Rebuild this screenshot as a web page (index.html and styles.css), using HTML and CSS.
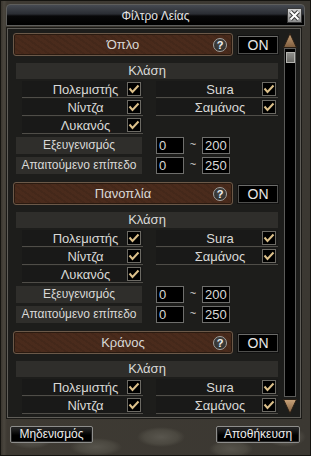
FILE: index.html
```html
<!DOCTYPE html>
<html lang="el">
<head>
    <meta charset="UTF-8">
    <meta name="viewport" content="width=device-width, initial-scale=1.0">
    <title>Φίλτρο Λείας</title>
    <link rel="stylesheet" href="styles.css">
</head>
<body>
<div class="window">
    <!-- Γραμμή τίτλου -->
    <div class="titlebar">
        <span class="title-spacer"></span>
        <span class="title">Φίλτρο Λείας</span>
        <span class="close">
            <svg width="15" height="15" viewBox="0 0 15 15">
                <defs>
                    <linearGradient id="cg" x1="0" y1="0" x2="0" y2="1">
                        <stop offset="0" stop-color="#d6d6d6"/>
                        <stop offset="1" stop-color="#8a8a8a"/>
                    </linearGradient>
                </defs>
                <rect x="0.5" y="0.5" width="14" height="14" fill="url(#cg)" stroke="#3a3a3a"/>
                <path d="M3.5 3.5 L11.5 11.5 M11.5 3.5 L3.5 11.5" stroke="#3c3c3c" stroke-width="4"/>
                <path d="M3.5 3.5 L11.5 11.5 M11.5 3.5 L3.5 11.5" stroke="#ffffff" stroke-width="2"/>
            </svg>
        </span>
    </div>

    <!-- Πίνακας φίλτρων -->
    <div class="panel">
        <div class="list">

            <section class="group">
                <div class="group-head">
                    <div class="group-name"><span class="group-title">Όπλο</span><span class="help">?</span></div>
                    <span class="toggle">ON</span>
                </div>
                <div class="class-title">Κλάση</div>
                <div class="class-grid">
                    <div class="class-cell"><span class="cell-label">Πολεμιστής</span><span class="check"><svg width="12" height="12" viewBox="0 0 12 12"><path d="M1.5 5.5 L4.5 9 L10.5 2.5" fill="none" stroke="#dcc08a" stroke-width="2"/></svg></span></div>
                    <div class="class-cell"><span class="cell-label">Sura</span><span class="check"><svg width="12" height="12" viewBox="0 0 12 12"><path d="M1.5 5.5 L4.5 9 L10.5 2.5" fill="none" stroke="#dcc08a" stroke-width="2"/></svg></span></div>
                    <div class="class-cell"><span class="cell-label">Νίντζα</span><span class="check"><svg width="12" height="12" viewBox="0 0 12 12"><path d="M1.5 5.5 L4.5 9 L10.5 2.5" fill="none" stroke="#dcc08a" stroke-width="2"/></svg></span></div>
                    <div class="class-cell"><span class="cell-label">Σαμάνος</span><span class="check"><svg width="12" height="12" viewBox="0 0 12 12"><path d="M1.5 5.5 L4.5 9 L10.5 2.5" fill="none" stroke="#dcc08a" stroke-width="2"/></svg></span></div>
                    <div class="class-cell"><span class="cell-label">Λυκανός</span><span class="check"><svg width="12" height="12" viewBox="0 0 12 12"><path d="M1.5 5.5 L4.5 9 L10.5 2.5" fill="none" stroke="#dcc08a" stroke-width="2"/></svg></span></div>
                </div>
                <div class="range-row">
                    <span class="range-label">Εξευγενισμός</span>
                    <span class="field">0</span><span class="tilde">~</span><span class="field">200</span>
                </div>
                <div class="range-row">
                    <span class="range-label">Απαιτούμενο επίπεδο</span>
                    <span class="field">0</span><span class="tilde">~</span><span class="field">250</span>
                </div>
            </section>

            <section class="group">
                <div class="group-head">
                    <div class="group-name"><span class="group-title">Πανοπλία</span><span class="help">?</span></div>
                    <span class="toggle">ON</span>
                </div>
                <div class="class-title">Κλάση</div>
                <div class="class-grid">
                    <div class="class-cell"><span class="cell-label">Πολεμιστής</span><span class="check"><svg width="12" height="12" viewBox="0 0 12 12"><path d="M1.5 5.5 L4.5 9 L10.5 2.5" fill="none" stroke="#dcc08a" stroke-width="2"/></svg></span></div>
                    <div class="class-cell"><span class="cell-label">Sura</span><span class="check"><svg width="12" height="12" viewBox="0 0 12 12"><path d="M1.5 5.5 L4.5 9 L10.5 2.5" fill="none" stroke="#dcc08a" stroke-width="2"/></svg></span></div>
                    <div class="class-cell"><span class="cell-label">Νίντζα</span><span class="check"><svg width="12" height="12" viewBox="0 0 12 12"><path d="M1.5 5.5 L4.5 9 L10.5 2.5" fill="none" stroke="#dcc08a" stroke-width="2"/></svg></span></div>
                    <div class="class-cell"><span class="cell-label">Σαμάνος</span><span class="check"><svg width="12" height="12" viewBox="0 0 12 12"><path d="M1.5 5.5 L4.5 9 L10.5 2.5" fill="none" stroke="#dcc08a" stroke-width="2"/></svg></span></div>
                    <div class="class-cell"><span class="cell-label">Λυκανός</span><span class="check"><svg width="12" height="12" viewBox="0 0 12 12"><path d="M1.5 5.5 L4.5 9 L10.5 2.5" fill="none" stroke="#dcc08a" stroke-width="2"/></svg></span></div>
                </div>
                <div class="range-row">
                    <span class="range-label">Εξευγενισμός</span>
                    <span class="field">0</span><span class="tilde">~</span><span class="field">200</span>
                </div>
                <div class="range-row">
                    <span class="range-label">Απαιτούμενο επίπεδο</span>
                    <span class="field">0</span><span class="tilde">~</span><span class="field">250</span>
                </div>
            </section>

            <section class="group">
                <div class="group-head">
                    <div class="group-name"><span class="group-title">Κράνος</span><span class="help">?</span></div>
                    <span class="toggle">ON</span>
                </div>
                <div class="class-title">Κλάση</div>
                <div class="class-grid">
                    <div class="class-cell"><span class="cell-label">Πολεμιστής</span><span class="check"><svg width="12" height="12" viewBox="0 0 12 12"><path d="M1.5 5.5 L4.5 9 L10.5 2.5" fill="none" stroke="#dcc08a" stroke-width="2"/></svg></span></div>
                    <div class="class-cell"><span class="cell-label">Sura</span><span class="check"><svg width="12" height="12" viewBox="0 0 12 12"><path d="M1.5 5.5 L4.5 9 L10.5 2.5" fill="none" stroke="#dcc08a" stroke-width="2"/></svg></span></div>
                    <div class="class-cell"><span class="cell-label">Νίντζα</span><span class="check"><svg width="12" height="12" viewBox="0 0 12 12"><path d="M1.5 5.5 L4.5 9 L10.5 2.5" fill="none" stroke="#dcc08a" stroke-width="2"/></svg></span></div>
                    <div class="class-cell"><span class="cell-label">Σαμάνος</span><span class="check"><svg width="12" height="12" viewBox="0 0 12 12"><path d="M1.5 5.5 L4.5 9 L10.5 2.5" fill="none" stroke="#dcc08a" stroke-width="2"/></svg></span></div>
                </div>
            </section>

        </div>

        <!-- Μπάρα κύλισης -->
        <div class="scrollbar">
            <svg class="arrow" width="14" height="15" viewBox="0 0 14 15">
                <defs>
                    <linearGradient id="ag" x1="0" y1="0" x2="0" y2="1">
                        <stop offset="0" stop-color="#caa37a"/>
                        <stop offset="1" stop-color="#7d5c3c"/>
                    </linearGradient>
                </defs>
                <polygon points="7,0.5 13.5,14.5 0.5,14.5" fill="url(#ag)" stroke="#2a2016"/>
            </svg>
            <div class="track"><div class="thumb"></div></div>
            <svg class="arrow" width="14" height="15" viewBox="0 0 14 15">
                <polygon points="0.5,0.5 13.5,0.5 7,14.5" fill="url(#ag)" stroke="#2a2016"/>
            </svg>
        </div>
    </div>

    <!-- Κουμπιά -->
    <div class="footer">
        <span class="btn btn-reset">Μηδενισμός</span>
        <span class="btn btn-save">Αποθήκευση</span>
    </div>
</div>
</body>
</html>
```

FILE: styles.css
```css
/* Παράθυρο φίλτρου λείας */
* {
    box-sizing: border-box;
}

body {
    margin: 0;
    background: #2b2925;
    font-family: "Liberation Sans", Arial, sans-serif;
    font-size: 12px;
    color: #d9d9d7;
}

.window {
    width: 311px;
    height: 456px;
    padding: 3px 5px 0 5px;
    border: 1px solid #151410;
    display: flex;
    flex-direction: column;
    background:
        radial-gradient(ellipse 22px 10px at 30px 438px, #58554d 0, #4b4841 70%, transparent 100%),
        radial-gradient(ellipse 26px 9px at 95px 446px, #57544c 0, #4a473f 70%, transparent 100%),
        radial-gradient(ellipse 24px 10px at 160px 436px, #59564e 0, #4b4840 70%, transparent 100%),
        radial-gradient(ellipse 22px 9px at 230px 448px, #56534b 0, #4a473f 70%, transparent 100%),
        radial-gradient(ellipse 20px 10px at 285px 436px, #58554d 0, #4b4841 70%, transparent 100%),
        linear-gradient(to right, #3a362f 0, #4a463e 3px, #3e3a33 6px, #3b3832 100%);
}

.titlebar {
    height: 22px;
    display: flex;
    align-items: center;
    border: 1px solid #5e5e5c;
    border-radius: 4px 4px 0 0;
    background: linear-gradient(to bottom, #464a52 0, #2a2d33 45%, #080809 55%, #000 100%);
}

.title-spacer {
    width: 17px;
}

.title {
    flex: 1;
    text-align: center;
    color: #e2e2e2;
    padding-top: 1px;
}

.close {
    width: 15px;
    height: 15px;
    margin-right: 2px;
    display: flex;
}

.panel {
    height: 390px;
    margin: 2px 4px 0 1px;
    padding: 4px 3px 3px 5px;
    display: flex;
    gap: 3px;
    border: 1px solid #5f5d58;
    box-shadow: 0 0 0 1px #1b1a17;
    background: #1d1d1b;
}

.list {
    width: 267px;
    flex: none;
    overflow: hidden;
}

.group {
    margin-bottom: 8px;
}

.group-head {
    display: flex;
    align-items: center;
    gap: 5px;
    height: 23px;
}

.group-name {
    width: 220px;
    height: 23px;
    display: flex;
    align-items: center;
    padding: 0 5px 0 19px;
    border: 1px solid #6b5949;
    border-radius: 3px;
    box-shadow: inset 0 0 0 1px #2a1a10;
    background:
        repeating-linear-gradient(35deg, rgba(0,0,0,0.08) 0 2px, transparent 2px 5px),
        #4a2b1c;
}

.group-title {
    flex: 1;
    text-align: center;
    font-size: 13px;
}

.help {
    width: 14px;
    height: 14px;
    border-radius: 50%;
    border: 1px solid #a2a2a0;
    background: radial-gradient(circle at 50% 40%, #4a4a48, #262624);
    color: #f0f0f0;
    font-size: 11px;
    font-weight: bold;
    line-height: 12px;
    text-align: center;
}

.toggle {
    width: 40px;
    height: 18px;
    line-height: 16px;
    text-align: center;
    background: #000;
    border: 1px solid #4e4e4c;
    border-top-color: #6c6c6a;
    box-shadow: 0 0 0 1px #111;
    color: #e6e6e6;
    font-size: 14px;
}

.class-title {
    margin: 7px 2px 0 3px;
    height: 16px;
    line-height: 16px;
    text-align: center;
    background: #2f2e2b;
    font-size: 13px;
}

.class-grid {
    display: grid;
    grid-template-columns: 121px 122px;
    column-gap: 13px;
    row-gap: 1px;
    margin: 2px 0 0 9px;
}

.class-cell {
    height: 17px;
    display: flex;
    align-items: center;
    border-bottom: 1px solid #4f4d48;
    background: #191918;
}

.cell-label {
    flex: 1;
    text-align: center;
    padding-left: 22px;
    padding-top: 1px;
    font-size: 13px;
}

.check {
    width: 14px;
    height: 14px;
    margin-right: 2px;
    display: flex;
    align-items: center;
    justify-content: center;
    background: #000;
    border: 1px solid #6c6a64;
}

.range-row {
    display: flex;
    height: 17px;
    margin: 3px 0 0 3px;
}

.range-label {
    width: 126px;
    margin-right: 14px;
    line-height: 17px;
    text-align: center;
    background: #2f2e2b;
}

.field {
    width: 28px;
    height: 17px;
    line-height: 15px;
    padding-left: 2px;
    background: #000;
    border: 1px solid #6e6e6c;
    font-size: 13px;
}

.tilde {
    width: 18px;
    text-align: center;
    line-height: 15px;
    font-size: 11px;
}

.scrollbar {
    width: 14px;
    display: flex;
    flex-direction: column;
}

.arrow {
    display: block;
    flex: none;
}

.track {
    flex: 1;
    margin: 0 1px 2px 1px;
    border: 1px solid #5b5b59;
    background: #000;
}

.thumb {
    width: 9px;
    height: 11px;
    margin: 3px 0 0 1px;
    border: 1px solid #b4b4b0;
    background: linear-gradient(#8e8e8a, #6a6a66);
}

.footer {
    display: flex;
    justify-content: space-between;
    margin-top: 8px;
}

.btn {
    height: 17px;
    line-height: 15px;
    text-align: center;
    color: #ececec;
    border: 1px solid #8e8e8c;
    border-radius: 2px;
    box-shadow: inset 0 0 0 1px #222;
    background: linear-gradient(#2c2c2c, #000 55%);
}

.btn-reset {
    width: 83px;
    margin-left: 4px;
}

.btn-save {
    width: 84px;
    margin-right: 5px;
}
```
